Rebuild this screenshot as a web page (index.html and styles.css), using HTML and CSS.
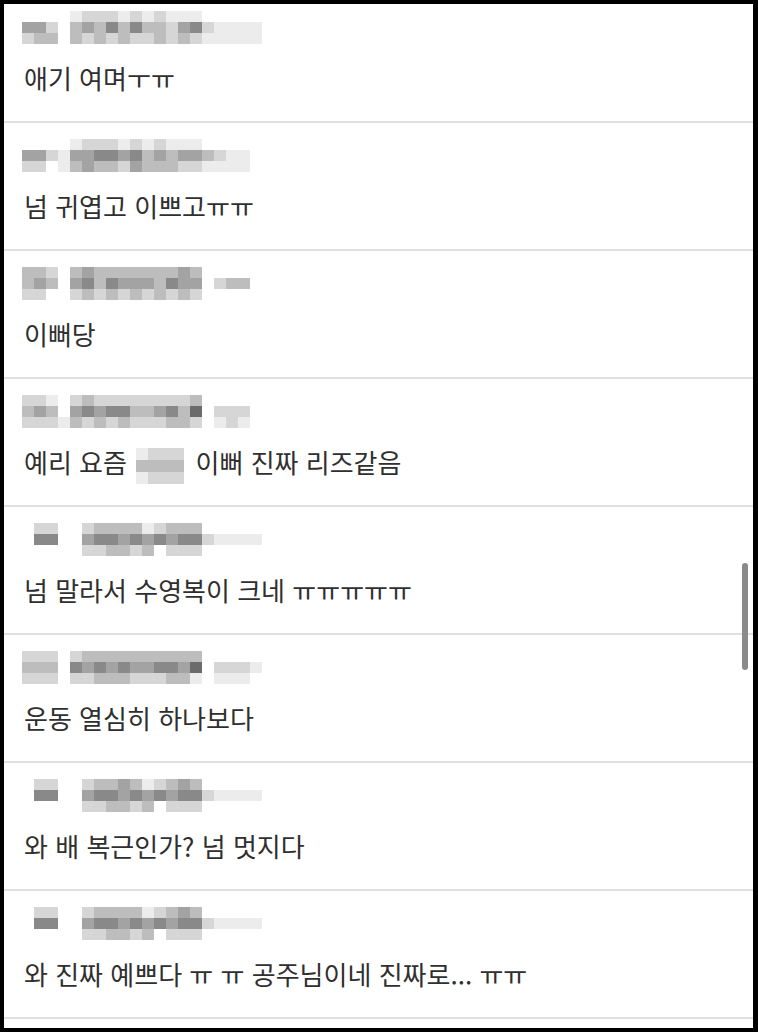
FILE: index.html
```html
<!DOCTYPE html>
<html lang="ko">
<head>
  <meta charset="utf-8">
  <title>댓글</title>
  <link rel="stylesheet" href="styles.css">
</head>
<body>

<div class="frame">
  <div class="list">
    <div class="item">
      <div class="mosaic" data-rows="00001222121211100000|44203435353324521111|23303232322323211111"></div>
      <div class="text">애기 여며ㅜㅠ</div>
    </div>
    <div class="item">
      <div class="mosaic" data-rows="00001222121211100000|44214455453434432110|22013433243332211110"></div>
      <div class="text">넘 귀엽고 이쁘고ㅠㅠ</div>
    </div>
    <div class="item">
      <div class="mosaic" data-rows="33203433333334300000|34304535444354402330|22002323232323200000"></div>
      <div class="text">이뻐당</div>
    </div>
    <div class="item">
      <div class="mosaic" data-rows="22102322222222300000|34304545533453602220|22213232322233201210"></div>
      <div class="text">예리 요즘 <span class="mosaic inline" data-rows="1222|3333|1222"></span> 이뻐 진짜 리즈같음</div>
    </div>
    <div class="item">
      <div class="mosaic" data-rows="02200233331233300000|05500455454545521111|00000223323022200000"></div>
      <div class="text">넘 말라서 수영복이 크네 ㅠㅠㅠㅠㅠ</div>
    </div>
    <div class="item">
      <div class="mosaic" data-rows="22202333333333300000|33305454544554602221|22202233322233101110"></div>
      <div class="text">운동 열심히 하나보다</div>
    </div>
    <div class="item">
      <div class="mosaic" data-rows="02200233431234300000|05500455454545521111|00000223323022200000"></div>
      <div class="text">와 배 복근인가? 넘 멋지다</div>
    </div>
    <div class="item">
      <div class="mosaic" data-rows="02200233331234300000|05500455454545521111|00000223323022200000"></div>
      <div class="text">와 진짜 예쁘다 ㅠ ㅠ 공주님이네 진짜로... ㅠㅠ</div>
    </div>
  </div>

  <div class="scrollbar"></div>
</div>

<script src="mosaic.js"></script>

</body>
</html>
```

FILE: styles.css
```css
body {
  margin: 0;
  background: #000;
  font-family: "Noto Sans CJK KR", "Noto Sans", sans-serif;
}

.frame {
  position: relative;
  width: 758px;
  height: 1032px;
  box-sizing: border-box;
  border: 4px solid #000;
  border-right-width: 5px;
  background: #fff;
  overflow: hidden;
}

.list {
  margin-top: -9px;
}

.item {
  height: 110px;
  padding: 16px 0 0 20px;
  border-bottom: 2px solid #e0e0e0;
}

.mosaic {
  display: grid;
  grid-template-columns: repeat(20, 12px);
  grid-auto-rows: 11px;
  margin-left: -2px;
  width: max-content;
}

.mosaic.inline {
  display: inline-grid;
  grid-template-columns: repeat(4, 12px);
  grid-auto-rows: 12px;
  margin: 0 4px 0 2px;
  vertical-align: middle;
}

.cell { filter: blur(0.6px); }
.s0 { background: transparent; }
.s1 { background: #ececec; }
.s2 { background: #d6d6d6; }
.s3 { background: #bdbdbd; }
.s4 { background: #a3a3a3; }
.s5 { background: #898989; }
.s6 { background: #6b6b6b; }

.text {
  margin-top: 18px;
  font-size: 26px;
  line-height: 32px;
  color: #2f2f2f;
  white-space: nowrap;
}

.scrollbar {
  position: absolute;
  left: 738px;
  top: 559px;
  width: 6px;
  height: 107px;
  border-radius: 3px;
  background: #8a8a8a;
}
```

FILE: mosaic.js
```js
// build the pixelated name blocks from the row patterns
document.querySelectorAll(".mosaic").forEach(function (box) {
  box.dataset.rows.split("|").forEach(function (row) {
    for (var i = 0; i < row.length; i++) {
      var cell = document.createElement("span");
      cell.className = "cell s" + row[i];
      box.appendChild(cell);
    }
  });
});
```
